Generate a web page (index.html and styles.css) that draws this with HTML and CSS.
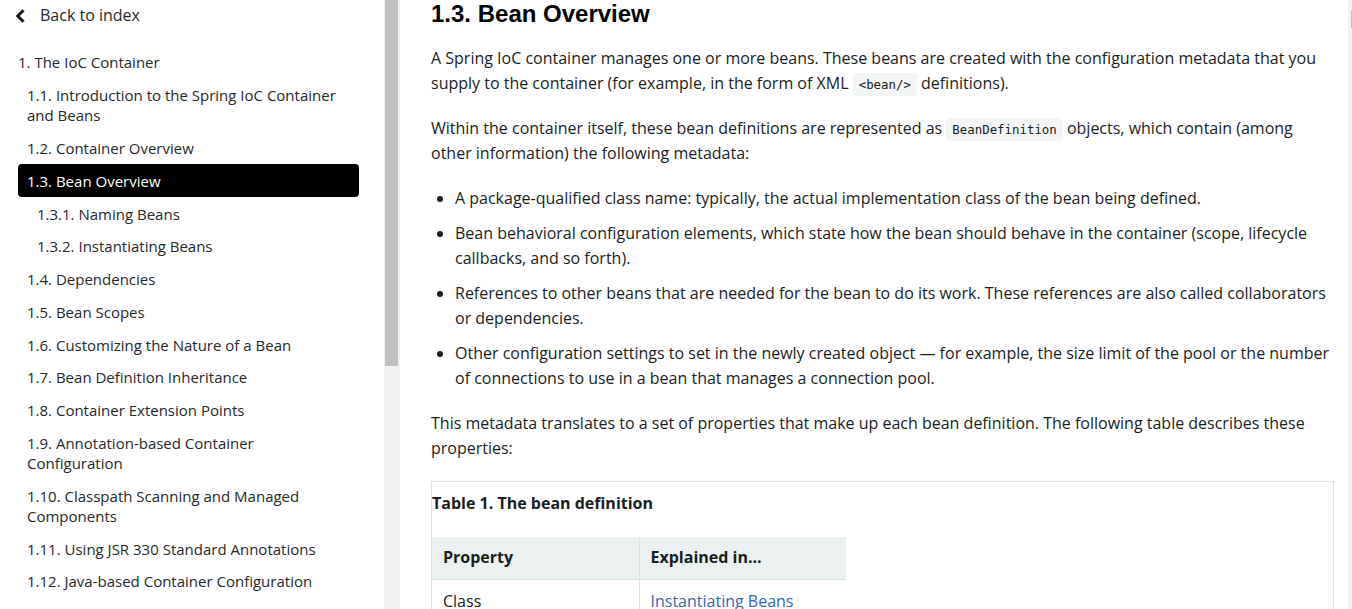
FILE: index.html
```html
<!DOCTYPE html>
<html lang="en">
<head>
<meta charset="utf-8">
<title>1.3. Bean Overview</title>
<link rel="stylesheet" href="styles.css">
</head>
<body>
<div class="page">
  <nav class="sidebar">
    <a class="back" href="#">
      <svg class="chev" width="11" height="14" viewBox="0 0 11 14"><path d="M8.6 1.3 L2.8 7 L8.6 12.7" fill="none" stroke="#1a1a1a" stroke-width="3" stroke-linejoin="miter"/></svg>
      <span>Back to index</span>
    </a>
    <ul class="toc">
      <li class="l1">1. The IoC Container</li>
      <li class="l2">1.1. Introduction to the Spring IoC Container and Beans</li>
      <li class="l2">1.2. Container Overview</li>
      <li class="l2 active">1.3. Bean Overview</li>
      <li class="l3">1.3.1. Naming Beans</li>
      <li class="l3">1.3.2. Instantiating Beans</li>
      <li class="l2">1.4. Dependencies</li>
      <li class="l2">1.5. Bean Scopes</li>
      <li class="l2">1.6. Customizing the Nature of a Bean</li>
      <li class="l2">1.7. Bean Definition Inheritance</li>
      <li class="l2">1.8. Container Extension Points</li>
      <li class="l2">1.9. Annotation-based Container Configuration</li>
      <li class="l2">1.10. Classpath Scanning and Managed Components</li>
      <li class="l2">1.11. Using JSR 330 Standard Annotations</li>
      <li class="l2">1.12. Java-based Container Configuration</li>
      <li class="l2">1.13. Environment Abstraction</li>
    </ul>
  </nav>
  <div class="side-scroll"><div class="side-thumb"></div></div>
  <main class="content">
    <h2 class="title">1.3. Bean Overview</h2>
    <p>A Spring IoC container manages one or more beans. These beans are created with the configuration metadata that you supply to the container (for example, in the form of XML <code>&lt;bean/&gt;</code> definitions).</p>
    <p>Within the container itself, these bean definitions are represented as <code>BeanDefinition</code> objects, which contain (among other information) the following metadata:</p>
    <ul class="bullets">
      <li>A package-qualified class name: typically, the actual implementation class of the bean being defined.</li>
      <li>Bean behavioral configuration elements, which state how the bean should behave in the container (scope, lifecycle callbacks, and so forth).</li>
      <li>References to other beans that are needed for the bean to do its work. These references are also called collaborators or dependencies.</li>
      <li>Other configuration settings to set in the newly created object — for example, the size limit of the pool or the number of connections to use in a bean that manages a connection pool.</li>
    </ul>
    <p>This metadata translates to a set of properties that make up each bean definition. The following table describes these properties:</p>
    <div class="tablebox">
      <div class="caption">Table 1. The bean definition</div>
      <table class="deftable">
        <thead>
          <tr><th>Property</th><th>Explained in...</th></tr>
        </thead>
        <tbody>
          <tr><td>Class</td><td><a href="#">Instantiating Beans</a></td></tr>
          <tr><td>Name</td><td><a href="#">Naming Beans</a></td></tr>
        </tbody>
      </table>
    </div>
  </main>
  <div class="page-scroll"><div class="page-thumb"></div></div>
</div>
</body>
</html>
```
FILE: styles.css
```css
html, body {
  margin: 0;
  padding: 0;
  height: 100%;
  overflow: hidden;
  background: #fff;
}
body {
  font-family: "Open Sans", "Liberation Sans", sans-serif;
  color: #191e1e;
}
.page {
  display: flex;
  height: 609px;
  overflow: hidden;
}
.sidebar {
  width: 384px;
  flex: 0 0 384px;
  box-sizing: border-box;
  padding: 0 25px 0 18px;
  overflow: hidden;
  color: #262a2a;
}
.back {
  display: flex;
  align-items: center;
  gap: 14px;
  height: 30px;
  margin-left: -3px;
  color: #262a2a;
  text-decoration: none;
  font-size: 16px;
}
.chev { display: block; margin-top: 1px; }
.toc {
  list-style: none;
  margin: 16px 0 0;
  padding: 0;
  font-size: 15px;
  line-height: 20px;
}
.toc li {
  padding: 6.4px 14px 6.4px 0;
  border-radius: 4px;
}
.toc .l1 { padding-left: 0; }
.toc .l2 { padding-left: 9px; }
.toc .l3 { padding-left: 19px; }
.toc .active {
  background: #000;
  color: #fff;
}
.side-scroll {
  width: 16px;
  flex: 0 0 16px;
  background: #f1f1f1;
}
.side-thumb {
  margin-left: 1px;
  width: 13px;
  height: 366px;
  background: #c1c1c1;
}
.content {
  flex: 1 1 auto;
  box-sizing: border-box;
  padding: 0 14px 0 31px;
  font-size: 16px;
  line-height: 25px;
  overflow: hidden;
}
.title {
  font-family: "Liberation Sans", Arial, sans-serif;
  font-size: 24px;
  line-height: 28px;
  font-weight: bold;
  margin: 0 0 18px;
  color: #000;
}
.content p {
  margin: 0 0 20px;
}
code {
  font-family: "DejaVu Sans Mono", "Liberation Mono", monospace;
  font-size: 12.4px;
  line-height: 1;
  background: #f3f4f4;
  border-radius: 4px;
  padding: 4px 6px;
  color: #191e1e;
}
.bullets {
  margin: 0 0 20px;
  padding-left: 24px;
}
.bullets li {
  margin-bottom: 10px;
}
.bullets li:last-child { margin-bottom: 0; }
.tablebox {
  border: 1px solid #dbe2e2;
  padding-top: 9px;
}
.caption {
  font-weight: bold;
  margin-bottom: 21px;
}
.deftable {
  border-collapse: collapse;
  width: 414px;
}
.deftable th, .deftable td {
  text-align: left;
  padding: 9px 11px;
  border-right: 1px solid #dbe2e2;
  border-bottom: 1px solid #dbe2e2;
  width: 50%;
}
.deftable th { padding-top: 8px; }
.deftable th:last-child, .deftable td:last-child { border-right: none; }
.deftable thead tr { background: #ebf1f1; }
.deftable th { font-weight: bold; }
.deftable a { color: #3a66b4; text-decoration: none; }
.page-scroll {
  width: 4px;
  flex: 0 0 4px;
  background: #f1f1f1;
}
.page-thumb {
  margin-left: 3px;
  margin-top: 10px;
  width: 1px;
  height: 18px;
  background: #c1c1c1;
}
```
